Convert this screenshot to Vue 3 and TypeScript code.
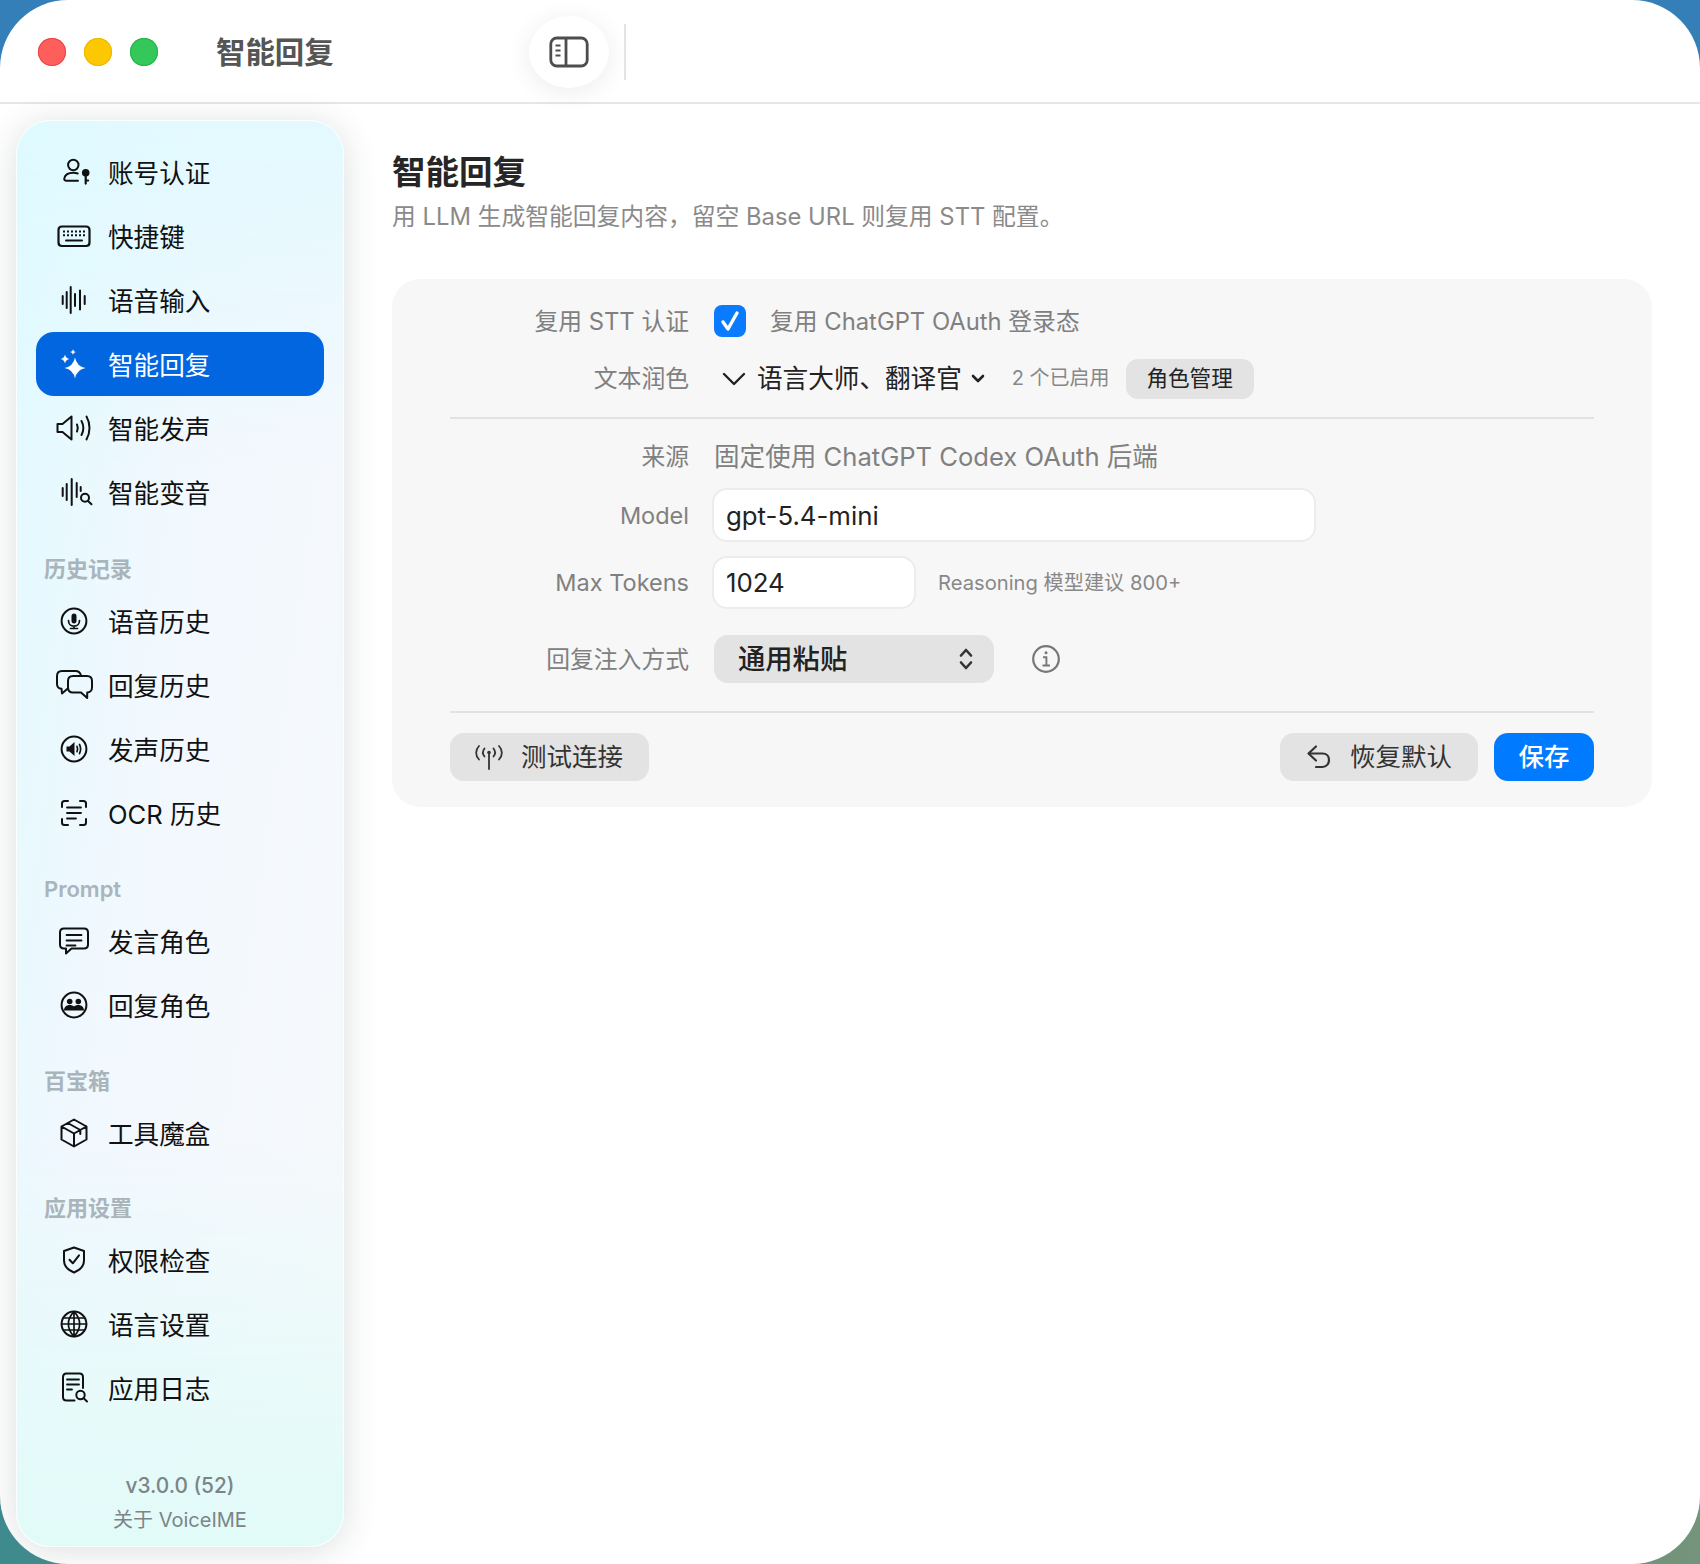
<script setup lang="ts">
type Shape = { d: string; fill?: boolean; w?: number; dash?: string }
type NavItem = { label: string; icon: Shape[]; active?: boolean }
type NavGroup = { title?: string; items: NavItem[] }

const star = (x: number, y: number, r: number) => {
  const k = r * 0.16
  return `M${x} ${y - r}Q${x + k} ${y - k} ${x + r} ${y}Q${x + k} ${y + k} ${x} ${y + r}Q${x - k} ${y + k} ${x - r} ${y}Q${x - k} ${y - k} ${x} ${y - r}z`
}
const dot = (x: number, y: number, r: number) =>
  `M${x - r} ${y}a${r} ${r} 0 1 0 ${r * 2} 0a${r} ${r} 0 1 0 ${-r * 2} 0z`
const ring = { d: dot(20, 20, 12.4) }

const icons: Record<string, Shape[]> = {
  userKey: [
    { d: dot(19.3, 13, 5.2) },
    { d: 'M24 28.7H12.5c-1.6 0-2.5-.9-2.2-2.3.8-3.6 4.6-5.6 9-5.6 1.6 0 3.1.2 4.4.7' },
    { d: dot(31.7, 20.7, 3.8), fill: true },
    { d: 'M31.7 22v9.6M31.7 28.5h2.4', w: 2.2 },
  ],
  keyboard: [
    { d: 'M8 10.5h24c2.2 0 3.5 1.3 3.5 3.5v12.500c0 2.200-1.300 3.500-3.500 3.500H8c-2.200 0-3.500-1.300-3.500-3.500V14c0-2.200 1.300-3.500 3.500-3.500z', w: 2.200 },
    { d: 'M9 15.500h22M9 19.200h22', w: 2, dash: '2 2' },
    { d: 'M12 24.500h16', w: 2 },
  ],
  wave: [{ d: 'M8.700 16v8M12.700 12v16M16.700 7v26M21 14v12M26 10.500v19M30.700 16v8' }],
  sparkle: [
    { d: star(21, 24, 10.5), fill: true },
    { d: star(11, 15, 4.5), fill: true },
    { d: star(19, 8, 2.8), fill: true },
  ],
  speaker: [
    { d: 'M3.500 16h5l9-7.500v23l-9-7.500h-5z' },
    { d: 'M23 16.500c1 2.200 1 4.800 0 7M27.500 13c2.300 4.300 2.300 9.700 0 14M32.500 8.500c4 7 4 16 0 23' },
  ],
  waveSearch: [
    { d: 'M8.700 16v8M12.700 12v16M17.700 7v26M22.700 11v14M26.700 15v4' },
    { d: dot(31, 25.7, 4) },
    { d: 'M34 29l3.500 3.300' },
  ],
  micRing: [
    ring,
    { d: 'M17.500 15c0-1.500 1-2.500 2.500-2.500s2.500 1 2.500 2.500v5c0 1.500-1 2.500-2.500 2.500s-2.500-1-2.500-2.500z', fill: true },
    { d: 'M14.500 19.500c0 3.500 2.300 5.700 5.500 5.700s5.500-2.200 5.500-5.700M20 25.200v2.300M16.500 27.500h7', w: 1.700 },
  ],
  chats: [
    { d: 'M27 10.500C26.300 7.800 24.500 6 21.500 6H8C4.800 6 3 7.800 3 11v8c0 3 1.500 4.500 4.500 4.700L8 28.500l5.500-4.800' },
    { d: 'M19 11h14c3 0 5 2 5 5v6.500c0 3-2 5-4.800 5v5.500l-6.200-5.500H19c-3 0-5-2-5-5V16c0-3 2-5 5-5z' },
  ],
  soundRing: [
    ring,
    { d: 'M12.500 17.500h3l5-4.500v14l-5-4.500h-3z', fill: true },
    { d: 'M23 17.300c.8 1.700.8 3.700 0 5.400M25.500 15.500c1.400 2.800 1.400 6.200 0 9', w: 1.700 },
  ],
  scan: [
    { d: 'M8 14v-3.500C8 9 9 8 10.500 8H14M26 8h3.500C31 8 32 9 32 10.500V14M32 26v3.500c0 1.500-1 2.500-2.500 2.500H26M14 32h-3.500C9 32 8 31 8 29.500V26' },
    { d: 'M13 14.500h14M13 20h14M13 25.500h9', w: 1.800 },
  ],
  bubble: [
    { d: 'M10 7.500h20c2.500 0 4 1.500 4 4v12c0 2.500-1.500 4-4 4H17.500L12 32.500v-5h-2c-2.500 0-4-1.500-4-4v-12c0-2.500 1.500-4 4-4z' },
    { d: 'M12.500 14h15M12.500 19.500h15M12.500 24.500h9', w: 1.800 },
  ],
  people: [
    ring,
    { d: dot(15.7, 16.500, 2.800), fill: true },
    { d: dot(24.3, 16.500, 2.800), fill: true },
    { d: 'M10 25.500c0-3.300 2.500-5.500 5.700-5.500 1.700 0 3.200.5 4.300 1.500 1.100-1 2.600-1.500 4.300-1.500 3.200 0 5.700 2.200 5.700 5.500z', fill: true },
  ],
  cube: [
    { d: 'M20 6.500l12.500 7v13l-12.500 7-12.500-7v-13zM7.500 13.500l12.500 7 12.500-7M20 20.500v13M13.800 10l12.500 7v4' },
  ],
  shield: [
    { d: 'M20 7.500l10 3.500v9.500c0 5.800-3.800 9.500-10 12-6.200-2.500-10-6.200-10-12V11z' },
    { d: 'M15.500 19.800l3.300 3.500 6.200-8' },
  ],
  globe: [
    ring,
    { d: 'M20 7.600c-7.500 7.500-7.500 17.300 0 24.800M20 7.600c7.500 7.500 7.500 17.300 0 24.800M20 7.600v24.800M7.600 20h24.800M9.500 14h21M9.500 26h21', w: 1.700 },
  ],
  logs: [
    { d: 'M20.500 32.500h-8c-2.200 0-3.500-1.300-3.500-3.500V9.500C9 7 10.300 5.500 12.500 5.500h13c2.200 0 3.500 1.500 3.500 4V20' },
    { d: 'M13 11.500h12M13 16.500h12M13 21.500h5', w: 1.800 },
    { d: dot(26.500, 27, 4.200) },
    { d: 'M29.500 30l3.500 3.500' },
  ],
}

const groups: NavGroup[] = [
  {
    items: [
      { label: '账号认证', icon: icons.userKey },
      { label: '快捷键', icon: icons.keyboard },
      { label: '语音输入', icon: icons.wave },
      { label: '智能回复', icon: icons.sparkle, active: true },
      { label: '智能发声', icon: icons.speaker },
      { label: '智能变音', icon: icons.waveSearch },
    ],
  },
  {
    title: '历史记录',
    items: [
      { label: '语音历史', icon: icons.micRing },
      { label: '回复历史', icon: icons.chats },
      { label: '发声历史', icon: icons.soundRing },
      { label: 'OCR 历史', icon: icons.scan },
    ],
  },
  {
    title: 'Prompt',
    items: [
      { label: '发言角色', icon: icons.bubble },
      { label: '回复角色', icon: icons.people },
    ],
  },
  { title: '百宝箱', items: [{ label: '工具魔盒', icon: icons.cube }] },
  {
    title: '应用设置',
    items: [
      { label: '权限检查', icon: icons.shield },
      { label: '语言设置', icon: icons.globe },
      { label: '应用日志', icon: icons.logs },
    ],
  },
]
</script>

<template>
  <div class="window">
    <header class="titlebar">
      <div class="lights">
        <span class="light red"></span>
        <span class="light yellow"></span>
        <span class="light green"></span>
      </div>
      <span class="window-title">智能回复</span>
      <button class="toggle">
        <svg width="40" height="32" viewBox="0 0 40 32" fill="none" stroke="#4d4d4d" stroke-width="2.800">
          <rect x="1.800" y="2" width="36.400" height="28" rx="6" />
          <path d="M17 2v28" />
          <path d="M6.500 9.500h5M6.500 14.500h5M6.500 19.500h5" stroke-width="2" />
        </svg>
      </button>
      <span class="title-sep"></span>
    </header>

    <div class="body">
      <aside class="sidebar">
        <section v-for="(group, i) in groups" :key="i" class="nav-group">
          <h4 v-if="group.title" class="nav-title">{{ group.title }}</h4>
          <div v-for="item in group.items" :key="item.label" class="nav-item" :class="{ active: item.active }">
            <svg class="nav-icon" viewBox="0 0 40 40" width="40" height="40" stroke-linejoin="round">
              <path
                v-for="(shape, n) in item.icon"
                :key="n"
                :d="shape.d"
                :fill="shape.fill ? 'currentColor' : 'none'"
                :stroke="shape.fill ? 'none' : 'currentColor'"
                :stroke-width="shape.w ?? 2"
                :stroke-dasharray="shape.dash"
                :stroke-linecap="shape.dash ? 'butt' : 'round'"
              />
            </svg>
            <span class="nav-label">{{ item.label }}</span>
          </div>
        </section>
        <footer class="side-footer">
          <div class="version">v3.0.0 (52)</div>
          <div class="about">关于 VoiceIME</div>
        </footer>
      </aside>

      <main class="content">
        <h1 class="page-title">智能回复</h1>
        <p class="page-sub">用 LLM 生成智能回复内容，留空 Base URL 则复用 STT 配置。</p>

        <div class="card">
          <div class="row r-auth">
            <label class="row-label">复用 STT 认证</label>
            <div class="row-ctrl">
              <span class="check">
                <svg width="24" height="24" viewBox="0 0 24 24" fill="none" stroke="#fff" stroke-width="3.400" stroke-linecap="round" stroke-linejoin="round">
                  <path d="M5 13l5 7 9-16" />
                </svg>
              </span>
              <span class="muted check-text">复用 ChatGPT OAuth 登录态</span>
            </div>
          </div>

          <div class="row r-polish">
            <label class="row-label">文本润色</label>
            <div class="row-ctrl">
              <svg class="chev-big" width="24" height="14" viewBox="0 0 24 14" fill="none" stroke="#222" stroke-width="2.400" stroke-linecap="round" stroke-linejoin="round">
                <path d="M2 2l10 10 10-10" />
              </svg>
              <span class="polish-value">语言大师、翻译官</span>
              <svg class="chev-small" width="14" height="9" viewBox="0 0 14 9" fill="none" stroke="#222" stroke-width="2.600" stroke-linecap="round" stroke-linejoin="round">
                <path d="M2 2l5 5 5-5" />
              </svg>
              <span class="hint enabled">2 个已启用</span>
              <button class="btn small">角色管理</button>
            </div>
          </div>

          <hr class="sep first" />

          <div class="row r-source">
            <label class="row-label">来源</label>
            <div class="row-ctrl"><span class="muted source">固定使用 ChatGPT Codex OAuth 后端</span></div>
          </div>

          <div class="row r-model">
            <label class="row-label">Model</label>
            <div class="row-ctrl"><input class="field model" value="gpt-5.4-mini" /></div>
          </div>

          <div class="row r-tokens">
            <label class="row-label">Max Tokens</label>
            <div class="row-ctrl">
              <input class="field tokens" value="1024" />
              <span class="hint reasoning">Reasoning 模型建议 800+</span>
            </div>
          </div>

          <div class="row r-inject">
            <label class="row-label">回复注入方式</label>
            <div class="row-ctrl">
              <div class="select">
                <span class="select-text">通用粘贴</span>
                <svg width="16" height="24" viewBox="0 0 16 24" fill="none" stroke="#333" stroke-width="2.600" stroke-linecap="round" stroke-linejoin="round">
                  <path d="M3 8.500L8 3l5 5.500M3 15.500L8 21l5-5.500" />
                </svg>
              </div>
              <svg class="info" width="30" height="30" viewBox="0 0 30 30" fill="none" stroke="#777" stroke-width="2.200">
                <circle cx="15" cy="15" r="12.800" />
                <path d="M12 13.200h3.400v8M11.500 21.500h7.500" stroke-width="1.900" />
                <circle cx="15" cy="8.800" r="1.500" fill="#777" stroke="none" />
              </svg>
            </div>
          </div>

          <hr class="sep second" />

          <div class="actions">
            <button class="btn test">
              <svg width="30" height="26" viewBox="0 0 30 26" fill="none" stroke="#333" stroke-width="1.800" stroke-linecap="round">
                <path d="M15 8.500V25" />
                <circle cx="15" cy="8.500" r="1.800" fill="#333" stroke="none" />
                <path d="M10.500 4.500c-2 2.500-2 5.500 0 8M19.500 4.500c2 2.500 2 5.500 0 8M5 2c-3.800 4-3.800 9.500 0 13.500M25 2c3.800 4 3.800 9.500 0 13.500" />
              </svg>
              <span class="btn-text">测试连接</span>
            </button>
            <span class="spacer"></span>
            <button class="btn reset">
              <svg width="26" height="26" viewBox="0 0 26 26" fill="none" stroke="#333" stroke-width="2.200" stroke-linecap="round" stroke-linejoin="round">
                <path d="M10 2.500L2.500 9.500l7.500 7" />
                <path d="M3 9.500h13.500c4 0 6.500 2.800 6.500 6.500s-2.500 7-6.500 7H10" />
              </svg>
              <span class="btn-text">恢复默认</span>
            </button>
            <button class="btn primary">保存</button>
          </div>
        </div>
      </main>
    </div>
  </div>
</template>

<style>
html,
body {
  margin: 0;
  background:
    linear-gradient(90deg, rgba(40, 120, 120, 0) 0%, rgba(125, 150, 120, 0.85) 100%) bottom / 100% 120px no-repeat,
    linear-gradient(180deg, #347fb8 0%, #3a85a8 50%, #3f8a8c 100%);
}
</style>

<style scoped>
* {
  box-sizing: border-box;
}

.window {
  width: 1700px;
  height: 1564px;
  background: #fff;
  border-radius: 68px;
  overflow: hidden;
  display: flex;
  flex-direction: column;
  font-family: Inter, "Noto Sans CJK SC", sans-serif;
  color: #1d1d1f;
}

.titlebar {
  height: 104px;
  flex: none;
  display: flex;
  align-items: center;
  padding-top: 2px;
  border-bottom: 2px solid #e6e6e6;
}

.lights {
  display: flex;
  gap: 18px;
  margin-left: 38px;
}

.light {
  width: 28px;
  height: 28px;
  border-radius: 50%;
}

.red {
  background: #ff5f5b;
  box-shadow: inset 0 0 0 1px #e8464a;
}

.yellow {
  background: #fdc802;
  box-shadow: inset 0 0 0 1px #e9b800;
}

.green {
  background: #34c759;
  box-shadow: inset 0 0 0 1px #25b548;
}

.window-title {
  margin-left: 58px;
  width: 117px;
  padding-bottom: 5px;
  font-size: 29.400px;
  font-weight: 600;
  color: #555;
  white-space: nowrap;
}

.toggle {
  margin-left: 196px;
  width: 80px;
  height: 72px;
  padding: 0;
  border: 0;
  border-radius: 50%;
  background: #fff;
  box-shadow: 0 4px 26px rgba(0, 0, 0, 0.08);
  display: flex;
  align-items: center;
  justify-content: center;
}

.title-sep {
  margin-left: 15px;
  width: 2px;
  height: 56px;
  background: #e4e4e4;
}

.body {
  flex: 1;
  display: flex;
  min-height: 0;
}

.sidebar {
  width: 328px;
  margin: 16px 0 17px 16px;
  padding: 19px 19px 9px;
  flex: none;
  display: flex;
  flex-direction: column;
  border: 1px solid rgba(255, 255, 255, 0.8);
  border-radius: 34px;
  background:
    linear-gradient(180deg, rgba(222, 250, 255, 0.75) 0%, rgba(222, 250, 255, 0) 24%, rgba(222, 251, 247, 0) 72%, #e1fbf8 100%),
    linear-gradient(98deg, #e0faff 0%, #f1f8fe 40%, #f7f9fb 100%);
  box-shadow: 0 4px 34px rgba(40, 50, 55, 0.16);
}

.nav-title {
  margin: 31px 0 7px 8px;
  height: 26px;
  line-height: 26px;
  font-size: 22px;
  font-weight: 600;
  color: #a9b4bb;
}

.nav-group:nth-child(2) .nav-title {
  margin-top: 32px;
}

.nav-group:nth-child(5) .nav-title {
  margin-top: 30px;
}

.nav-item {
  height: 64px;
  display: flex;
  align-items: center;
  gap: 14px;
  padding-left: 18px;
  border-radius: 18px;
  font-size: 25.600px;
  color: #111;
  white-space: nowrap;
}

.nav-label {
  padding-bottom: 2px;
}

.nav-item.active {
  background: #0266e0;
  color: #fff;
}

.nav-icon {
  flex: none;
  overflow: visible;
}

.side-footer {
  margin-top: auto;
  text-align: center;
}

.version {
  font-size: 20.800px;
  font-weight: 500;
  line-height: 34px;
  color: #7d8488;
}

.about {
  font-size: 20px;
  line-height: 34px;
  color: #7d8488;
}

.content {
  flex: 1;
  min-width: 0;
  padding: 46px 48px 0 48px;
}

.page-title {
  margin: 0;
  font-size: 33.500px;
  line-height: 44px;
  font-weight: 700;
  color: #262626;
}

.page-sub {
  margin: 7px 0 46px;
  font-size: 23.800px;
  line-height: 32px;
  color: #8a8a8a;
  white-space: nowrap;
}

.card {
  height: 528px;
  padding: 0 58px;
  background: #f7f7f7;
  border-radius: 28px;
  display: flow-root;
}

.row {
  display: grid;
  grid-template-columns: 239px 1fr;
  column-gap: 25px;
  align-items: center;
}

.row-label {
  padding-bottom: 4px;
  text-align: right;
  font-size: 23.800px;
  color: #808080;
  white-space: nowrap;
}

.r-model .row-label,
.r-tokens .row-label {
  padding-bottom: 0;
  font-size: 23.500px;
}

.row-ctrl {
  display: flex;
  align-items: center;
  min-width: 0;
}

.r-auth {
  height: 40px;
  margin-top: 22px;
}

.r-polish {
  height: 40px;
  margin-top: 17px;
}

.r-source {
  height: 40px;
  margin-top: 17px;
}

.r-model {
  height: 54px;
  margin-top: 12px;
}

.r-tokens {
  height: 53px;
  margin-top: 14px;
}

.r-inject {
  height: 48px;
  margin-top: 26px;
}

.muted {
  padding-bottom: 4px;
  color: #808080;
  white-space: nowrap;
}

.check {
  width: 32px;
  height: 32px;
  border-radius: 8px;
  background: #0a7aff;
  display: flex;
  align-items: center;
  justify-content: center;
}

.check-text {
  margin-left: 24px;
  font-size: 23.800px;
}

.chev-big {
  margin-left: 8px;
}

.polish-value {
  margin-left: 11px;
  padding-bottom: 4px;
  font-size: 25.600px;
  color: #222;
  white-space: nowrap;
}

.chev-small {
  margin-left: 9px;
}

.hint {
  padding-bottom: 4px;
  font-size: 20.200px;
  color: #888;
  white-space: nowrap;
}

.enabled {
  margin-left: 27px;
  font-size: 20px;
}

.sep {
  margin: 0;
  border: 0;
  height: 2px;
  background: #e2e2e2;
}

.sep.first {
  margin-top: 19px;
}

.sep.second {
  margin-top: 28px;
}

.source {
  font-size: 25.600px;
}

.field {
  height: 100%;
  margin-left: -2px;
  padding: 0 12px;
  border: 2px solid #ececec;
  border-radius: 15px;
  background: #fff;
  font: inherit;
  font-size: 25.800px;
  color: #222;
  outline: none;
}

.r-model .row-ctrl,
.r-tokens .row-ctrl {
  height: 100%;
}

.model {
  width: 604px;
}

.tokens {
  width: 204px;
}

.reasoning {
  margin-left: 22px;
  padding-bottom: 2px;
}

.select {
  width: 280px;
  height: 48px;
  padding: 0 20px 0 24px;
  border-radius: 14px;
  background: #e3e3e3;
  display: flex;
  align-items: center;
  justify-content: space-between;
  font-size: 27.300px;
  font-weight: 500;
  color: #222;
}

.select-text {
  padding-bottom: 4px;
}

.info {
  margin-left: 37px;
}

.actions {
  margin-top: 20px;
  display: flex;
  align-items: center;
}

.spacer {
  flex: 1;
}

.btn {
  height: 48px;
  padding: 0 24px;
  border: 0;
  border-radius: 14px;
  background: #e3e3e3;
  display: inline-flex;
  align-items: center;
  font: inherit;
  font-size: 25.500px;
  color: #333;
  white-space: nowrap;
}

.btn.test {
  width: 199px;
}

.btn.small {
  margin-left: 16px;
  width: 128px;
  height: 40px;
  padding: 0 0 4px;
  justify-content: center;
  border-radius: 12px;
  font-size: 21.600px;
  color: #222;
}

.btn-text {
  margin-left: 17px;
  padding-bottom: 5px;
}

.btn.reset {
  width: 198px;
  padding-left: 26px;
}

.btn.reset .btn-text {
  margin-left: 18px;
}

.btn.primary {
  margin-left: 16px;
  width: 100px;
  padding: 0 0 5px;
  justify-content: center;
  background: #007aff;
  font-weight: 500;
  color: #fff;
}
</style>
